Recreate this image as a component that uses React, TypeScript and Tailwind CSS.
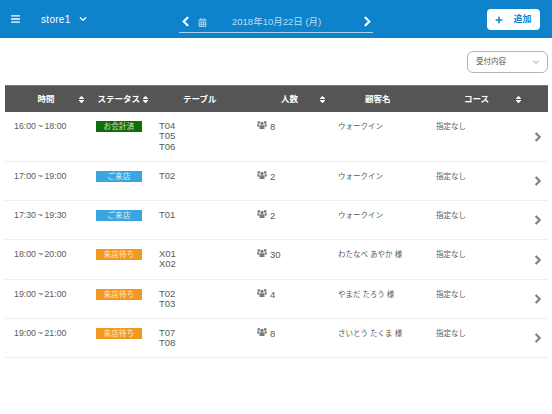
import React from "react";
import { FaBars, FaChevronDown, FaChevronLeft, FaChevronRight, FaPlus, FaSort, FaCalendarAlt } from "react-icons/fa";
import { FiChevronDown } from "react-icons/fi";

const font = { fontFamily: '"Liberation Sans","Noto Sans CJK JP",sans-serif' };

type Row = { time: string; status: string; color: string; tables: string[]; n: string; name: string; h: string };
const rows: Row[] = [
  { time: "16:00 ~ 18:00", status: "お会計済", color: "bg-[#0f6e0a]", tables: ["T04", "T05", "T06"], n: "8", name: "ウォークイン", h: "h-[50px]" },
  { time: "17:00 ~ 19:00", status: "ご来店", color: "bg-[#3aa5de]", tables: ["T02"], n: "2", name: "ウォークイン", h: "h-[39px]" },
  { time: "17:30 ~ 19:30", status: "ご来店", color: "bg-[#3aa5de]", tables: ["T01"], n: "2", name: "ウォークイン", h: "h-[39px]" },
  { time: "18:00 ~ 20:00", status: "来店待ち", color: "bg-[#f3981e]", tables: ["X01", "X02"], n: "30", name: "わたなべ あやか 様", h: "h-[40px]" },
  { time: "19:00 ~ 21:00", status: "来店待ち", color: "bg-[#f3981e]", tables: ["T02", "T03"], n: "4", name: "やまだ たろう 様", h: "h-[39px]" },
  { time: "19:00 ~ 21:00", status: "来店待ち", color: "bg-[#f3981e]", tables: ["T07", "T08"], n: "8", name: "さいとう たくま 様", h: "h-[39px]" },
];

function Sort() {
  return <FaSort className="text-[9px] text-white shrink-0" />;
}

function People() {
  return (
    <svg viewBox="0 0 10 8" className="w-[10px] h-[8px] shrink-0 mt-[0.5px] text-[#7a7a7a]" fill="currentColor">
      <circle cx="1.8" cy="1.4" r="1.3" />
      <circle cx="8.2" cy="1.4" r="1.3" />
      <circle cx="5" cy="2.4" r="1.6" />
      <path d="M0 3.2h2.2L2.6 5.8H0.6zM7.8 3.2H10L9.4 5.8H7.4z" />
      <path d="M2.8 4.2h4.4L7.6 8H2.4z" />
    </svg>
  );
}

export default function App() {
  return (
    <div className="w-[552px] h-[414px] bg-white overflow-hidden" style={font}>
      <header className="h-[38px] bg-[#0f82cc] flex items-center text-white">
        <FaBars className="ml-[11px] text-[10px] w-[9px]" />
        <span className="ml-[21px] text-[10px] tracking-[0.3px] mt-[1px] w-[31px] whitespace-nowrap">store1</span>
        <FaChevronDown className="ml-[7px] text-[8px]" />
        <div className="ml-[92px] w-[194px] h-[21px] mt-[7px] border-b border-[#a5d3ef] flex items-center">
          <FaChevronLeft className="text-[11px] ml-[1px] -mt-[1px]" stroke="currentColor" strokeWidth={30} />
          <FaCalendarAlt className="ml-[7px] text-[9px] text-[#9fd0ee]" />
          <span className="ml-[25px] text-[9.5px] text-[#bcdcf2] whitespace-nowrap">2018年10月22日 (月)</span>
          <FaChevronRight className="ml-auto text-[11px] -mt-[1px]" stroke="currentColor" strokeWidth={30} />
        </div>
        <button className="ml-auto mr-[12px] w-[53px] h-[21px] mt-[1px] bg-white rounded-[4px] flex items-center justify-center gap-[10px] text-[#0f82cc] text-[9px] font-bold">
          <FaPlus className="text-[8px]" />
          <span>追加</span>
        </button>
      </header>

      <div className="h-[47px] flex items-start justify-end pr-[4px] pt-[13px]">
        <div className="w-[81px] h-[22px] border border-[#b5b5b5] rounded-[6px] flex items-center pl-[8px] pr-[6px] text-[7.5px] text-[#555]">
          <span>受付内容</span>
          <FiChevronDown className="ml-auto text-[10px] text-[#888]" />
        </div>
      </div>

      <div className="mx-[4.5px]">
        <div className="h-[27px] bg-[#555555] border-t border-[#777] flex items-center text-white text-[8.5px] font-bold whitespace-nowrap">
          <div className="w-[72px] pl-[33px]">時間</div>
          <div className="w-[21px]"><Sort /></div>
          <div className="w-[43px]">ステータス</div>
          <div className="w-[42.5px]"><Sort /></div>
          <div className="w-[98px]">テーブル</div>
          <div className="w-[36.5px]">人数</div>
          <div className="w-[47.5px]"><Sort /></div>
          <div className="w-[99px]">顧客名</div>
          <div className="w-[49.5px]">コース</div>
          <Sort />
        </div>
        {rows.map((r, i) => (
          <div key={i} className={`${r.h} border-b border-[#eeeeee] flex items-start text-[#5a5a5a] relative`}>
            <div className="w-[91.5px] pl-[9.5px] pt-[8.5px] leading-[11px] text-[8.8px] [word-spacing:-0.8px] whitespace-nowrap">{r.time}</div>
            <div className="w-[63px] pt-[9px]">
              <div className={`${r.color} w-[46px] h-[11px] flex items-center justify-center text-[7.5px] text-white/80 tracking-[0.3px]`}>{r.status}</div>
            </div>
            <div className="w-[98px] pt-[8.5px] text-[9.5px] leading-[10.7px]">
              {r.tables.map((t) => <div key={t}>{t}</div>)}
            </div>
            <div className="w-[81px] pt-[8.5px] flex items-start gap-[3px] leading-[11px] text-[9.5px]">
              <People />
              <span>{r.n}</span>
            </div>
            <div className="w-[98px] pt-[9px] text-[7.5px] leading-[11px] whitespace-nowrap">{r.name}</div>
            <div className="pt-[9px] text-[7.5px] leading-[11px] whitespace-nowrap">指定なし</div>
            <FaChevronRight className="absolute right-[5px] top-1/2 -translate-y-1/2 text-[10px] text-[#808080]" stroke="currentColor" strokeWidth={40} />
          </div>
        ))}
      </div>
    </div>
  );
}
